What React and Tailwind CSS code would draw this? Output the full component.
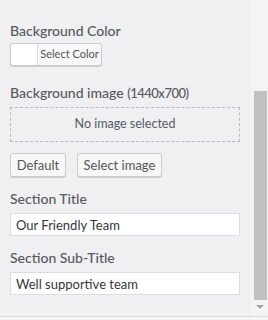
import React from "react";

function Label({ children, className = "" }) {
  return (
    <div className={`text-[14px] leading-[20px] font-medium text-[#555a60] whitespace-nowrap ${className}`}>
      {children}
    </div>
  );
}

function Btn({ children, className = "" }) {
  return (
    <button
      type="button"
      className={`h-[24px] bg-[#f7f7f7] border border-[#cccccc] rounded-[3px] shadow-[0_1px_0_#cccccc] text-[13px] leading-none whitespace-nowrap text-[#555555] ${className}`}
    >
      {children}
    </button>
  );
}

export default function App() {
  return (
    <div
      className="w-[268px] h-[320px] bg-[#f0eff1] flex flex-col overflow-hidden"
      style={{ fontFamily: 'Lato, "Open Sans", sans-serif' }}
    >
      <div className="flex flex-1 min-h-0">
        <div className="flex-1 pl-[10px] pr-[11px] pt-[21px]">
          {/* background color */}
          <Label>Background Color</Label>
          <div className="mt-[2px] w-[92px] h-[23px] flex bg-[#f7f7f7] border border-[#cccccc] rounded-[3px] shadow-[0_1px_0_#cccccc]">
            <div className="w-[27px] h-full bg-white rounded-l-[3px] border-r border-[#dddddd]" />
            <div className="flex-1 flex items-center justify-center text-[11px] text-[#555555]">
              Select Color
            </div>
          </div>

          {/* background image */}
          <Label className="mt-[17px]">
            Background image <span className="text-[13px] tracking-[-0.5px]">(1440x700)</span>
          </Label>
          <div className="mt-[4px] h-[35px] border border-dashed border-[#b4b9be] flex items-center justify-center text-[12.5px] text-[#555d66]">
            No image selected
          </div>
          <div className="mt-[11px] flex gap-[11px]">
            <Btn className="w-[56px]">Default</Btn>
            <Btn className="w-[85px]">Select image</Btn>
          </div>

          {/* section title */}
          <Label className="mt-[12px]">Section Title</Label>
          <input
            readOnly
            value="Our Friendly Team"
            className="mt-[4px] w-full h-[23px] px-[5px] bg-white border border-[#dddddd] text-[13px] text-[#32373c] outline-none"
          />

          <Label className="mt-[12px]">Section Sub-Title</Label>
          <input
            readOnly
            value="Well supportive team"
            className="mt-[4px] w-full h-[23px] px-[5px] bg-white border border-[#dddddd] text-[13px] text-[#32373c] outline-none"
          />
        </div>

        {/* scrollbar */}
        <div className="w-[17px] bg-[#f4f4f4] flex flex-col items-center">
          <div className="mt-[91px] ml-[2px] w-[13px] h-[209px] bg-[#c1c1c1]" />
          <div className="mt-[5px] w-0 h-0 border-l-[4px] border-r-[4px] border-t-[4px] border-l-transparent border-r-transparent border-t-[#a3a3a3]" />
        </div>
      </div>
      <div className="h-[4px] border-t border-[#dcdcde] bg-[#f5f5f5]" />
    </div>
  );
}
